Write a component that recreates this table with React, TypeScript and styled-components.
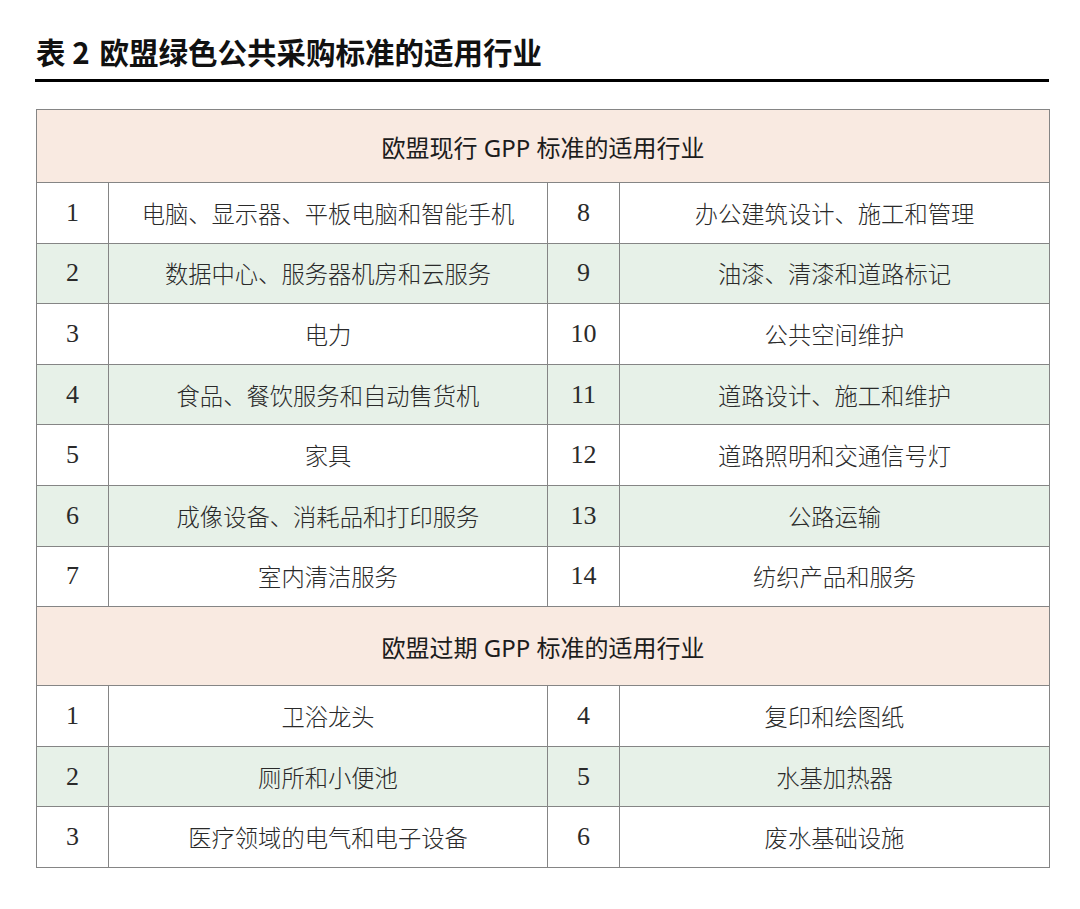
import styled, { createGlobalStyle } from 'styled-components';

// 表格数据
const currentRows = [
  { a: '1', b: '电脑、显示器、平板电脑和智能手机', c: '8', d: '办公建筑设计、施工和管理' },
  { a: '2', b: '数据中心、服务器机房和云服务', c: '9', d: '油漆、清漆和道路标记' },
  { a: '3', b: '电力', c: '10', d: '公共空间维护' },
  { a: '4', b: '食品、餐饮服务和自动售货机', c: '11', d: '道路设计、施工和维护' },
  { a: '5', b: '家具', c: '12', d: '道路照明和交通信号灯' },
  { a: '6', b: '成像设备、消耗品和打印服务', c: '13', d: '公路运输' },
  { a: '7', b: '室内清洁服务', c: '14', d: '纺织产品和服务' }
];

const expiredRows = [
  { a: '1', b: '卫浴龙头', c: '4', d: '复印和绘图纸' },
  { a: '2', b: '厕所和小便池', c: '5', d: '水基加热器' },
  { a: '3', b: '医疗领域的电气和电子设备', c: '6', d: '废水基础设施' }
];

type Row = { a: string; b: string; c: string; d: string };

const Section = ({ title, rows, last }: { title: string; rows: Row[]; last?: boolean }) => (
  <>
    <tr>
      <HeadCell colSpan={4} $tall={last}>{title}</HeadCell>
    </tr>
    {rows.map((row, index) => (
      <BodyRow key={index} $green={index % 2 === 1}>
        <NumCell>{row.a}</NumCell>
        <TextCell>{row.b}</TextCell>
        <NumCell>{row.c}</NumCell>
        <TextCell>{row.d}</TextCell>
      </BodyRow>
    ))}
  </>
);

export default function App() {
  return (
    <>
      <GlobalStyle />
      <Page>
        <Title>
          表 2<TitleGap />欧盟绿色公共采购标准的适用行业
        </Title>
        <Rule />
        <Table>
          <colgroup>
            <col style={{ width: 72 }} />
            <col style={{ width: 439 }} />
            <col style={{ width: 72 }} />
            <col style={{ width: 430 }} />
          </colgroup>
          <tbody>
            <Section title="欧盟现行 GPP 标准的适用行业" rows={currentRows} />
            <Section title="欧盟过期 GPP 标准的适用行业" rows={expiredRows} last />
          </tbody>
        </Table>
      </Page>
    </>
  );
}

const GlobalStyle = createGlobalStyle`
  body {
    margin: 0;
    background: #ffffff;
  }
`;

const Page = styled.div`
  width: 1080px;
  padding: 31px 31px 0 36px;
  box-sizing: border-box;
`;

const Title = styled.h1`
  margin: 0;
  font-family: "Noto Sans CJK SC", "Noto Sans", sans-serif;
  font-weight: 700;
  font-size: 29.5px;
  line-height: 40px;
  color: #111;
  display: flex;
  align-items: center;
`;

const TitleGap = styled.span`
  display: inline-block;
  width: 10px;
`;

const Rule = styled.div`
  margin-top: 8px;
  margin-left: -1px;
  height: 3px;
  background: #000;
`;

const Table = styled.table`
  margin-top: 27px;
  width: 1013px;
  border-collapse: collapse;
  table-layout: fixed;
  color: #2a2a2a;
`;

const HeadCell = styled.td<{ $tall?: boolean }>`
  height: ${({ $tall }) => ($tall ? '79px' : '73px')};
  padding: 0;
  box-sizing: border-box;
  border: 1px solid #858585;
  background: #f9eae1;
  text-align: center;
  font-family: "Noto Sans", "Noto Sans CJK SC", sans-serif;
  font-size: 24px;
  color: #1c1c1c;
`;

const BodyRow = styled.tr<{ $green?: boolean }>`
  height: 60.6px;
  background: ${({ $green }) => ($green ? '#e7f1e8' : '#ffffff')};
`;

const NumCell = styled.td`
  padding: 0;
  border: 1px solid #858585;
  text-align: center;
  font-family: "Liberation Serif", serif;
  font-size: 26px;
`;

const TextCell = styled.td`
  padding: 0;
  border: 1px solid #858585;
  text-align: center;
  font-family: "Liberation Serif", "Noto Sans CJK SC", serif;
  font-weight: 300;
  font-size: 23.3px;
`;
